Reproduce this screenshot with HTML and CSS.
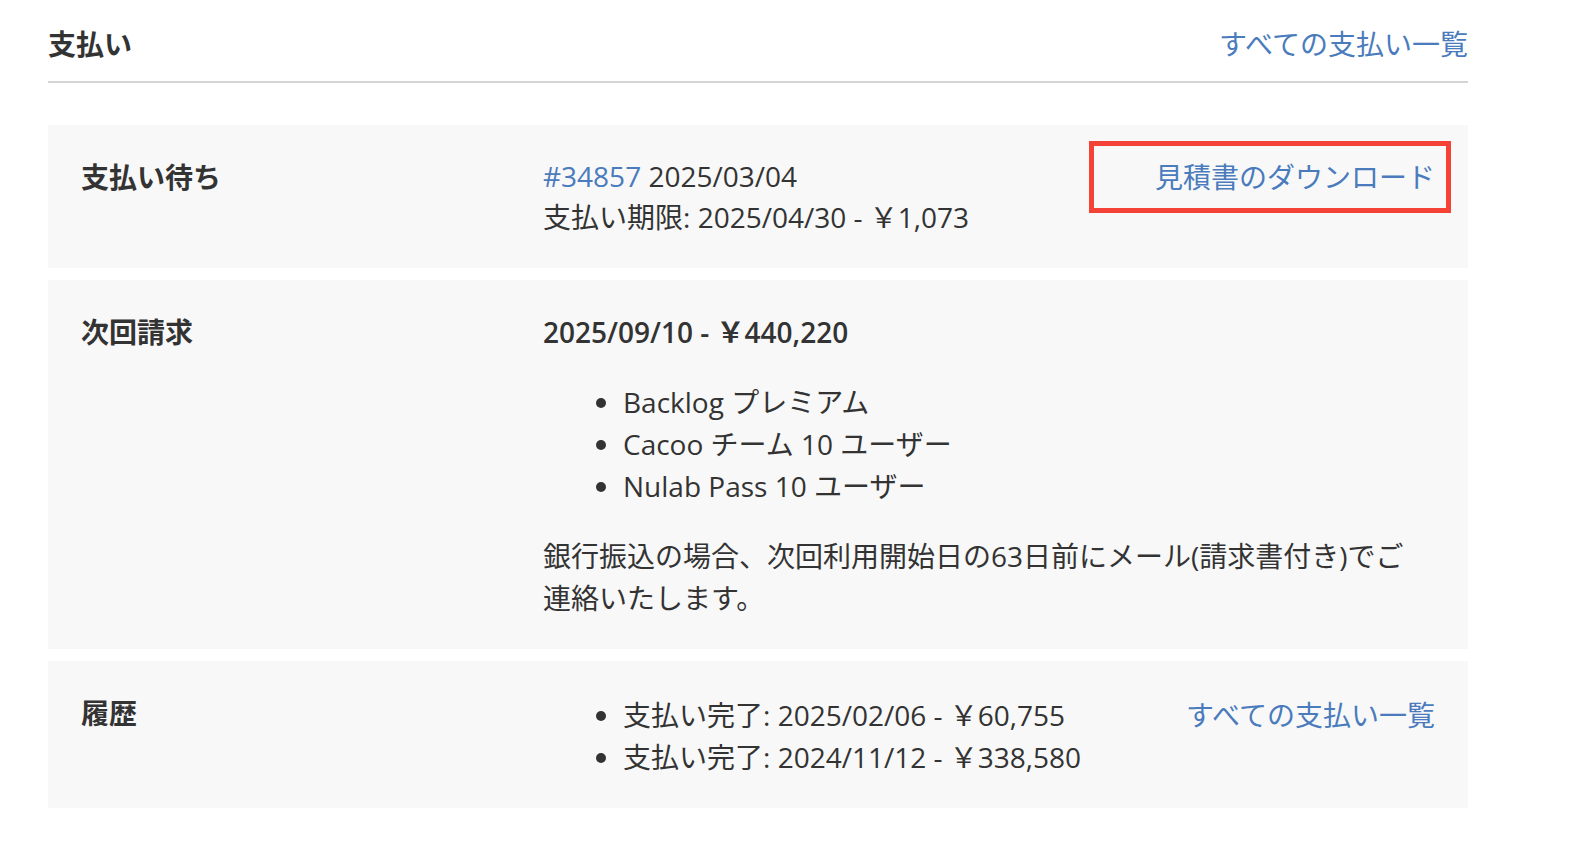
FILE: index.html
```html
<!DOCTYPE html>
<html lang="ja">
<head>
<meta charset="utf-8">
<title>支払い</title>
<link rel="stylesheet" href="styles.css">
</head>
<body>
<main class="page">
  <header class="section-head">
    <h2 class="section-title">支払い</h2>
    <a class="link" href="#">すべての支払い一覧</a>
  </header>

  <section class="card">
    <div class="label">支払い待ち</div>
    <div class="value value-tight">
      <div><a class="link" href="#">#34857</a> 2025/03/04</div>
      <div>支払い期限: 2025/04/30 - ￥1,073</div>
    </div>
    <div class="action">
      <a class="link" href="#">見積書のダウンロード</a>
      <span class="highlight"></span>
    </div>
  </section>

  <section class="card">
    <div class="label">次回請求</div>
    <div class="value">
      <div class="strong">2025/09/10 - ￥440,220</div>
      <ul class="list">
        <li>Backlog プレミアム</li>
        <li>Cacoo チーム 10 ユーザー</li>
        <li>Nulab Pass 10 ユーザー</li>
      </ul>
      <p class="note">銀行振込の場合、次回利用開始日の63日前にメール(請求書付き)でご連絡いたします。</p>
    </div>
    <div class="action"></div>
  </section>

  <section class="card card-history">
    <div class="label">履歴</div>
    <div class="value">
      <ul class="list list-flush">
        <li>支払い完了: 2025/02/06 - ￥60,755</li>
        <li>支払い完了: 2024/11/12 - ￥338,580</li>
      </ul>
    </div>
    <div class="action action-offset">
      <a class="link" href="#">すべての支払い一覧</a>
    </div>
  </section>
</main>
</body>
</html>
```

FILE: styles.css
```css
* { box-sizing: border-box; }

html, body {
  margin: 0;
  padding: 0;
  background: #ffffff;
}

body {
  font-family: "Open Sans", "Noto Sans CJK JP", sans-serif;
  font-size: 28px;
  line-height: 42px;
  color: #333333;
}

.page {
  width: 1420px;
  margin-left: 48px;
}

.section-head {
  display: flex;
  justify-content: space-between;
  align-items: center;
  padding-top: 23px;
  padding-bottom: 16px;
  border-bottom: 2px solid #d4d4d4;
  margin-bottom: 42px;
}

.section-title {
  margin: 0;
  font-size: 28px;
  font-weight: 700;
  line-height: 42px;
}

.link {
  color: #4a7bbd;
  text-decoration: none;
}

.card {
  display: grid;
  grid-template-columns: 462px 1fr auto;
  align-items: start;
  background: #f8f8f8;
  padding: 31px 33px 30px 33px;
  margin-bottom: 12px;
}

.card-history {
  padding-bottom: 30px;
}

.label {
  font-weight: 700;
}

.value-tight {
  line-height: 41px;
}

.value .strong {
  font-weight: 600;
}

.action {
  position: relative;
  text-align: right;
}

.action-offset {
  padding-top: 2px;
}

.highlight {
  position: absolute;
  left: -66px;
  right: -16px;
  top: -15px;
  bottom: -15px;
  border: 5px solid #f44236;
  pointer-events: none;
}

.list {
  margin: 28px 0;
  padding-left: 80px;
}

.list-flush {
  margin: 0;
  padding-top: 2px;
}

.note {
  margin: 0;
  width: 870px;
}
```
